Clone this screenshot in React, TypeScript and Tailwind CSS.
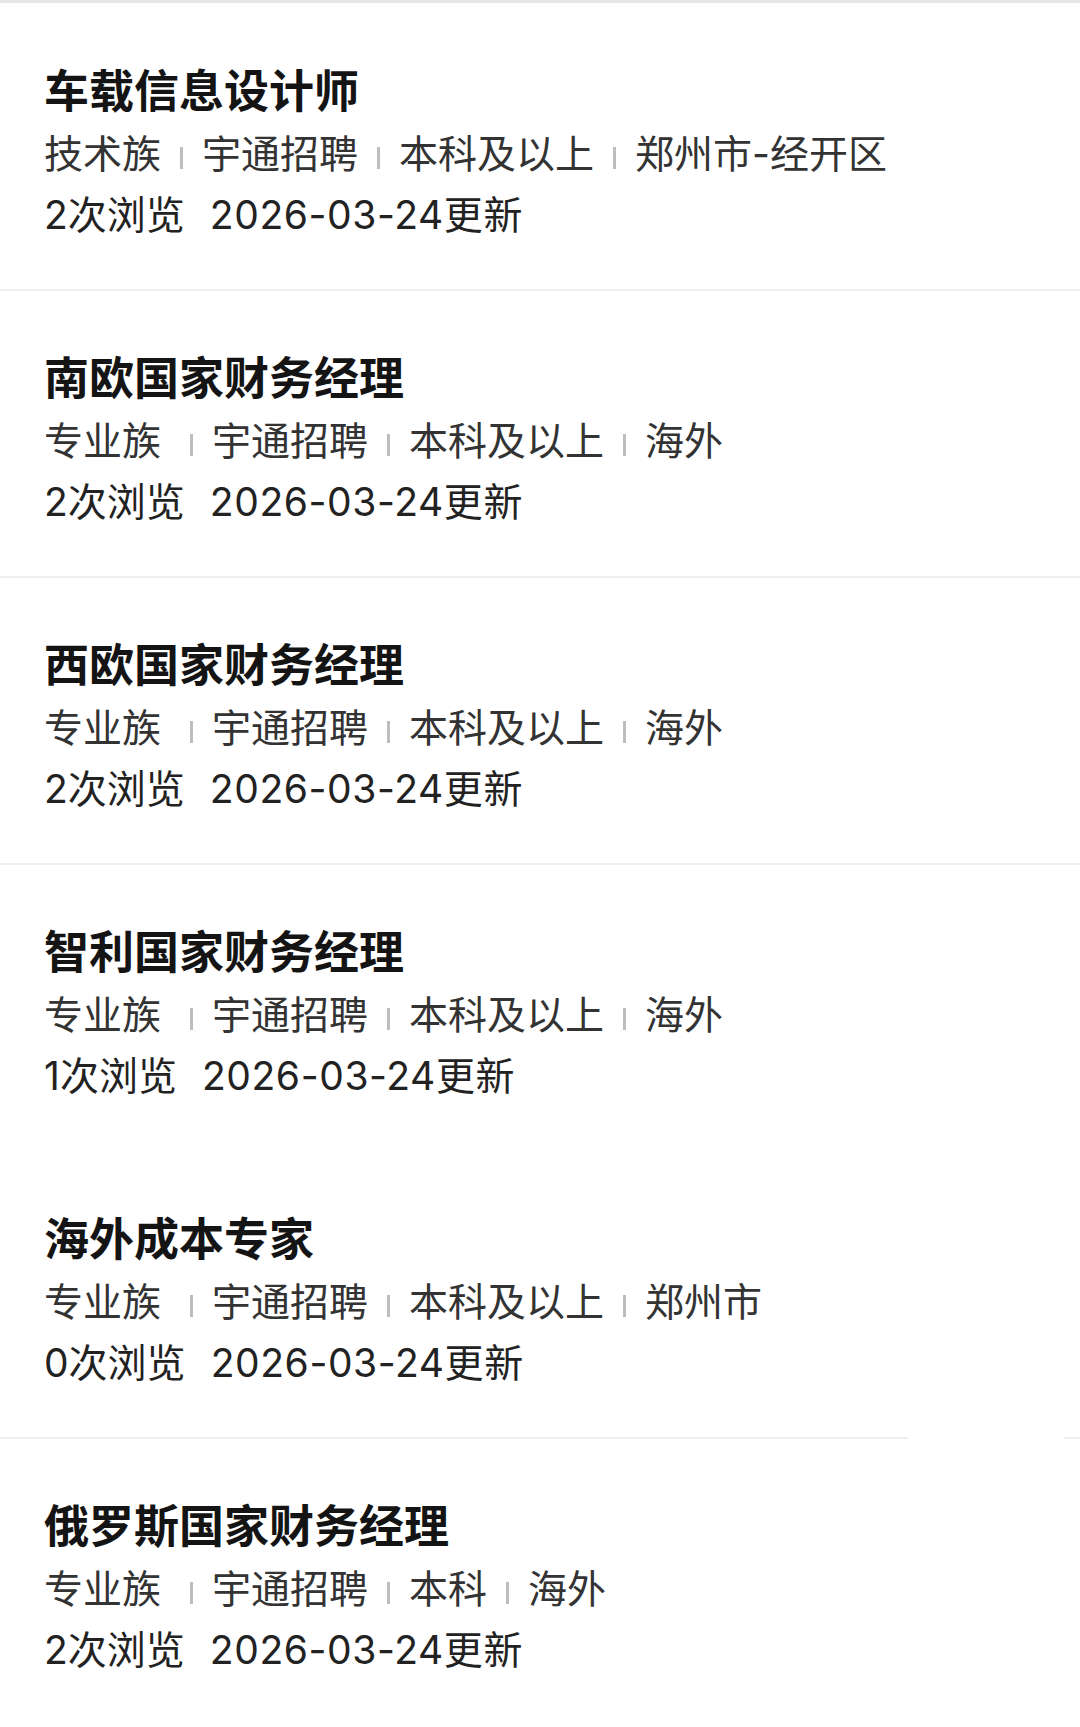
import React from 'react';

type Job = {
  title: string;
  family: string;
  tags: string[];
  views: number;
  date: string;
  divider: boolean;
};

const jobs: Job[] = [
  { title: '车载信息设计师', family: '技术族', tags: ['宇通招聘', '本科及以上', '郑州市-经开区'], views: 2, date: '2026-03-24', divider: true },
  { title: '南欧国家财务经理', family: '专业族', tags: ['宇通招聘', '本科及以上', '海外'], views: 2, date: '2026-03-24', divider: true },
  { title: '西欧国家财务经理', family: '专业族', tags: ['宇通招聘', '本科及以上', '海外'], views: 2, date: '2026-03-24', divider: true },
  { title: '智利国家财务经理', family: '专业族', tags: ['宇通招聘', '本科及以上', '海外'], views: 1, date: '2026-03-24', divider: false },
  { title: '海外成本专家', family: '专业族', tags: ['宇通招聘', '本科及以上', '郑州市'], views: 0, date: '2026-03-24', divider: true },
  { title: '俄罗斯国家财务经理', family: '专业族', tags: ['宇通招聘', '本科', '海外'], views: 2, date: '2026-03-24', divider: false },
];

const font = { fontFamily: 'Inter, "Noto Sans CJK SC", "Noto Sans", sans-serif' };

function Sep() {
  return <span className="mx-[19px] h-[22px] w-[3px] translate-y-[4px] bg-[#bdbdbd]" />;
}

function JobRow({ job }: { job: Job }) {
  return (
    <div className={`h-[287px] pl-[44px] pt-[57px] ${job.divider ? 'border-b-2 border-[#eeeeee]' : ''}`}>
      <h2 className="text-[45px] font-bold leading-[62px] text-[#141414]">{job.title}</h2>
      <div className="flex items-center text-[39px] leading-[61px] text-[#333333]">
        <span className={job.family === '专业族' ? 'mr-[10px]' : ''}>{job.family}</span>
        {job.tags.map((t) => (
          <React.Fragment key={t}>
            <Sep />
            <span>{t}</span>
          </React.Fragment>
        ))}
      </div>
      <div className="flex text-[39px] leading-[61px] text-[#222222]">
        <span className="mr-[25px]">{job.views}次浏览</span>
        <span className="tracking-[0.6px]">{job.date}更新</span>
      </div>
    </div>
  );
}

export default function App() {
  return (
    <div className="relative min-h-[1727px] w-[1080px] bg-white" style={font}>
      <div className="h-[4px] border-t-[3px] border-[#e6e6e6]" />
      {jobs.map((job) => (
        <JobRow key={job.title} job={job} />
      ))}
      <div className="absolute right-[16px] top-[1436px] flex w-[156px] flex-col items-center gap-[24px] bg-white pt-[20px]">
        <div className="h-[100px] w-[100px] rounded-full bg-[#fefefe]" />
        <div className="h-[120px] w-[100px] rounded-full bg-[#fefefe]" />
      </div>
    </div>
  );
}
